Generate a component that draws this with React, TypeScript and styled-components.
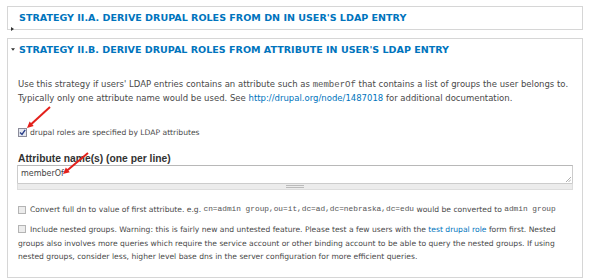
import React from 'react';
import styled, { createGlobalStyle } from 'styled-components';

const Global = createGlobalStyle`
  html, body { margin: 0; padding: 0; background: #fff; }
  body { font-family: "DejaVu Sans", Verdana, sans-serif; color: #494949; }
`;

const Page = styled.div`
  position: relative;
  width: 600px;
  height: 280px;
  overflow: hidden;
  box-sizing: border-box;
  padding: 6px 0 0 7px;
  display: flex;
  flex-direction: column;
  gap: 8px;
`;

const Fieldset = styled.section<{ $h: number }>`
  width: 576px;
  height: ${(p) => p.$h}px;
  box-sizing: border-box;
  border: 1px solid #d6d6d6;
  background: #fff;
  display: flex;
  flex-direction: column;
`;

const Legend = styled.div`
  display: flex;
  align-items: center;
  padding: 5px 0 0 3px;
  height: 12px;
  gap: 3px;
`;

const Caret = styled.span<{ $open?: boolean }>`
  width: 4px;
  height: 4px;
  align-self: ${(p) => (p.$open ? 'center' : 'flex-end')};
  margin-bottom: ${(p) => (p.$open ? '1px' : '-7px')};
  display: flex;
`;

const LegendText = styled.span`
  font-weight: bold;
  font-size: 9.55px;
  line-height: 12px;
  color: #0074bd;
  text-transform: uppercase;
  white-space: nowrap;
  margin-left: 1px;
`;

const Body = styled.div`
  padding: 0 0 0 10px;
  display: flex;
  flex-direction: column;
`;

const Para = styled.p<{ $mt: number; $lh?: number; $fs?: number }>`
  margin: ${(p) => p.$mt}px 0 0 0;
  font-size: ${(p) => p.$fs ?? 8.5}px;
  line-height: ${(p) => p.$lh ?? 13}px;
  white-space: nowrap;
`;

const Link = styled.a`
  color: #0074bd;
  text-decoration: none;
`;

const Mono = styled.code<{ $fs?: number }>`
  font-family: "Liberation Mono", "Courier New", monospace;
  font-size: ${(p) => p.$fs ?? 9}px;
  color: #555;
`;

const CheckRow = styled.label<{ $mt: number }>`
  margin-top: ${(p) => p.$mt}px;
  display: flex;
  align-items: center;
  font-size: 7.6px;
  line-height: 13px;
  white-space: nowrap;
`;

const Box = styled.span<{ $checked?: boolean }>`
  display: inline-flex;
  flex-shrink: 0;
  align-items: center;
  justify-content: center;
  width: ${(p) => (p.$checked ? 9 : 8)}px;
  height: ${(p) => (p.$checked ? 9 : 8)}px;
  box-sizing: border-box;
  border: 1px solid ${(p) => (p.$checked ? '#8c8c9a' : '#b4b4b4')};
  background: ${(p) => (p.$checked ? '#e4e8f0' : '#ececec')};
  vertical-align: -1px;
  margin-right: ${(p) => (p.$checked ? 3 : 4)}px;
`;

const FieldLabel = styled.div`
  margin-top: 13px;
  font-family: "Liberation Sans", Arial, sans-serif;
  font-weight: bold;
  font-size: 10.3px;
  line-height: 13px;
  color: #333;
`;

const TextArea = styled.div`
  width: 556px;
  box-sizing: border-box;
  display: flex;
  flex-direction: column;
  margin-left: -1px;
`;

const Input = styled.div`
  position: relative;
  height: 18px;
  box-sizing: border-box;
  border: 1px solid #ccc;
  border-top-color: #b8b8b8;
  border-bottom: none;
  font-size: 8px;
  line-height: 16px;
  padding-left: 3px;
  color: #444;
`;

const Resize = styled.svg`
  position: absolute;
  right: 1px;
  bottom: 1px;
`;

const Grippie = styled.div`
  height: 7px;
  box-sizing: border-box;
  border: 1px solid #ddd;
  border-top-color: #ccc;
  background: #ececec;
  display: flex;
  align-items: center;
  justify-content: center;
`;

const Handle = styled.span`
  width: 18px;
  height: 3px;
  border-top: 1px solid #bbb;
  border-bottom: 1px solid #bbb;
  box-sizing: border-box;
`;

const Overlay = styled.svg`
  position: absolute;
  left: 0;
  top: 0;
  pointer-events: none;
`;

const Check = () => (
  <svg width="7" height="7" viewBox="0 0 7 7">
    <path d="M1 3.5 L3 5.5 L6.2 0.8" stroke="#2a3f8a" strokeWidth="1.4" fill="none" />
  </svg>
);

const Arrow = ({ x1, y1, x2, y2 }: { x1: number; y1: number; x2: number; y2: number }) => {
  const a = Math.atan2(y2 - y1, x2 - x1);
  const L = 7;
  const w = 0.45;
  const p1 = [x2 - L * Math.cos(a - w), y2 - L * Math.sin(a - w)];
  const p2 = [x2 - L * Math.cos(a + w), y2 - L * Math.sin(a + w)];
  return (
    <g>
      <line x1={x1} y1={y1} x2={x2 - 3 * Math.cos(a)} y2={y2 - 3 * Math.sin(a)} stroke="#e3201b" strokeWidth="2" />
      <polygon points={`${x2},${y2} ${p1[0]},${p1[1]} ${p2[0]},${p2[1]}`} fill="#e3201b" />
    </g>
  );
};

export default function App() {
  return (
    <>
      <Global />
      <Page>
        <Fieldset $h={24}>
          <Legend>
            <Caret>
              <svg width="4" height="4" viewBox="0 0 4 4"><path d="M0 0 L3 2 L0 4Z" fill="#333" /></svg>
            </Caret>
            <LegendText>Strategy II.A. Derive Drupal Roles from DN in user's LDAP Entry</LegendText>
          </Legend>
        </Fieldset>
        <Fieldset $h={240}>
          <Legend>
            <Caret $open>
              <svg width="5" height="3" viewBox="0 0 5 3"><path d="M0 0 L5 0 L2.5 3Z" fill="#333" /></svg>
            </Caret>
            <LegendText>Strategy II.B. Derive Drupal Roles from Attribute in user's LDAP Entry</LegendText>
          </Legend>
          <Body>
            <Para $mt={22}>
              Use this strategy if users' LDAP entries contains an attribute such as <Mono>memberOf</Mono> that contains a list of groups the user belongs to.
              <br />
              Typically only one attribute name would be used. See <Link href="#">http://drupal.org/node/1487018</Link> for additional documentation.
            </Para>
            <CheckRow $mt={21}>
              <Box $checked><Check /></Box>
              drupal roles are specified by LDAP attributes
            </CheckRow>
            <FieldLabel>Attribute name(s) (one per line)</FieldLabel>
            <TextArea>
              <Input>
                memberOf
                <Resize width="5" height="5" viewBox="0 0 5 5">
                  <path d="M5 0 L0 5 M5 2.5 L2.5 5" stroke="#999" strokeWidth="0.8" />
                </Resize>
              </Input>
              <Grippie><Handle /></Grippie>
            </TextArea>
            <CheckRow $mt={13}>
              <Box />
              Convert full dn to value of first attribute. e.g.&nbsp;<Mono $fs={7.8}>cn=admin group,ou=it,dc=ad,dc=nebraska,dc=edu</Mono>&nbsp;would be converted to&nbsp;<Mono $fs={7.8}>admin group</Mono>
            </CheckRow>
            <Para $mt={7} $lh={13.5} $fs={7.6}>
              <Box />Include nested groups. Warning: this is fairly new and untested feature. Please test a few users with the <Link href="#">test drupal role</Link> form first. Nested
              <br />
              groups also involves more queries which require the service account or other binding account to be able to query the nested groups. If using
              <br />
              nested groups, consider less, higher level base dns in the server configuration for more efficient queries.
            </Para>
          </Body>
        </Fieldset>
        <Overlay width="600" height="280">
          <Arrow x1={50} y1={107} x2={27} y2={128} />
          <Arrow x1={88} y1={153} x2={63} y2={174} />
        </Overlay>
      </Page>
    </>
  );
}
